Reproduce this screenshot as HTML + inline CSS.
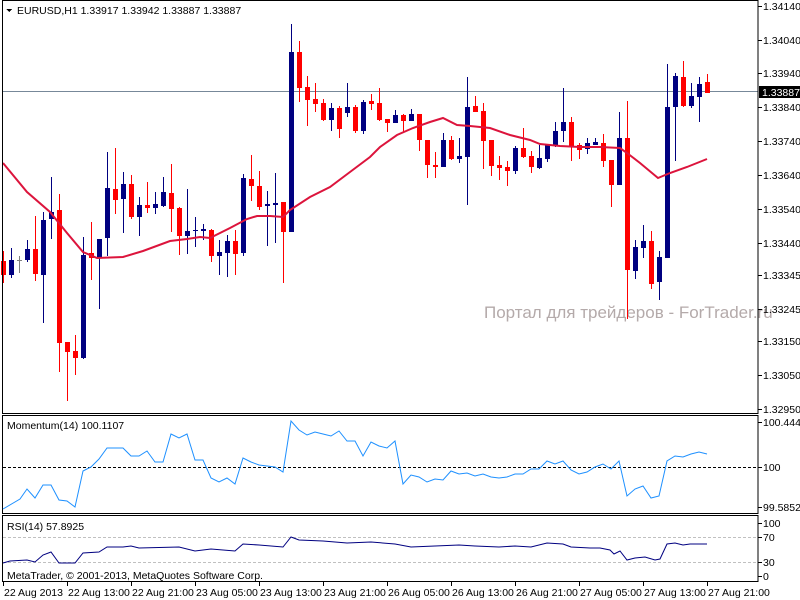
<!DOCTYPE html>
<html><head><meta charset="utf-8">
<style>
html,body{margin:0;padding:0;background:#fff;}
body{width:800px;height:600px;overflow:hidden;position:relative;font-family:"Liberation Sans",sans-serif;}
svg{position:absolute;left:0;top:0;}
text{font-family:"Liberation Sans","DejaVu Sans",sans-serif;font-size:10.5px;fill:#000;}
</style></head><body>
<svg id="s" width="800" height="600" viewBox="0 0 800 600" shape-rendering="crispEdges">
<text x="484" y="318" style="font-size:17px;fill:#b4aaaa;font-family:'Liberation Sans','DejaVu Sans',sans-serif">Портал для трейдеров - ForTrader.ru</text>
<line x1="2" y1="91.5" x2="758" y2="91.5" stroke="#778899" stroke-width="1"/>
<g id="c"></g>
<polyline id="ma" fill="none" stroke="#dc143c" stroke-width="2" shape-rendering="auto" points="3,163 27,192 50,212 67,233 83,252 97,258 123,257 143,251 170,241 187,239 200,237 210,238 230,228 247,219 257,216 270,216 283,217 290,210 310,197 330,187 350,172 370,157 380,147 397,135 413,128 430,122 443,118 457,125 470,126 490,128 510,135 530,140 540,144 560,146 580,147 600,147 620,148 627,153 640,163 658,178 670,173 687,167 707,159"/>
<rect x="2.5" y="0.5" width="755.5" height="413" fill="none" stroke="#000"/>
<rect x="2.5" y="415.5" width="755.5" height="98" fill="none" stroke="#000"/>
<rect x="2.5" y="515.5" width="755.5" height="66" fill="none" stroke="#000"/>
<polygon points="6,9 12,9 9,12" fill="#000"/>
<text x="17" y="14">EURUSD,H1  1.33917 1.33942 1.33887 1.33887</text>
<text x="7" y="429">Momentum(14) 100.1107</text>
<text x="7" y="530">RSI(14) 57.8925</text>
<text x="7" y="579">MetaTrader, © 2001-2013, MetaQuotes Software Corp.</text>
<line x1="3" y1="467.5" x2="758" y2="467.5" stroke="#000" stroke-dasharray="3,2"/>
<polyline fill="none" stroke="#1e90ff" stroke-width="1" shape-rendering="auto" points="3,509 20,499 27,489 35,498 43,485 51,485 59,500 67,501 75,507 83,471 91,467 99,459 107,448 115,448 123,448 131,456 139,456 147,451 155,462 163,462 171,434 179,438 187,434 195,460 203,460 211,478 219,482 227,478 235,484 243,458 251,462 259,465 267,466 275,467 283,472 291,421 299,430 307,435 315,432 323,434 331,436 339,431 347,441 355,441 363,456 371,442 379,446 387,448 395,441 403,484 411,475 419,477 427,482 435,479 443,480 451,471 459,474 467,473 475,476 483,474 491,477 499,478 507,477 515,474 523,474 531,469 539,469 547,461 555,464 563,461 571,470 579,474 587,472 595,467 603,464 611,469 619,461 627,496 635,489 643,486 651,498 659,496 667,461 675,456 683,457 691,454 699,452 707,454"/>
<line x1="3" y1="537.5" x2="758" y2="537.5" stroke="#c0c0c0" stroke-dasharray="3,2"/>
<line x1="3" y1="562.5" x2="758" y2="562.5" stroke="#c0c0c0" stroke-dasharray="3,2"/>
<polyline fill="none" stroke="#000080" stroke-width="1" shape-rendering="auto" points="3,563 10,561 27,560 35,562 43,555 51,552 59,563 75,563 83,553 99,552 107,547 123,547 131,546 139,548 179,547 195,551 211,549 235,551 243,544 259,545 283,547 291,537 299,540 323,541 347,543 371,542 395,544 411,547 435,546 459,545 475,546 499,547 515,546 531,547 547,543 563,544 571,547 590,548 600,548 610,550 614,554 620,551 627,560 635,558 645,557 655,560 660,559 667,544 675,543 683,545 690,544 707,544"/>
<g id="ax"></g>
<rect x="759" y="86" width="41" height="12" fill="#000"/>
<text x="762" y="96" style="fill:#fff">1.33887</text>
</svg>
<script>
var d=[[261,275,251,283,'r'],[260,275,248,278,'b'],[260,260,256,273,'g'],[249,260,240,262,'b'],[249,274,216,281,'r'],[220,275,212,323,'b'],[212,219,177,239,'b'],[210,343,194,372,'r'],[342,352,342,401,'r'],[351,358,335,375,'r'],[255,358,237,359,'b'],[253,258,222,280,'r'],[239,257,239,309,'b'],[188,238,152,256,'b'],[189,200,148,214,'r'],[184,199,172,233,'b'],[184,217,175,219,'r'],[205,217,197,236,'b'],[205,208,182,213,'r'],[204,208,192,214,'b'],[192,206,177,207,'b'],[193,209,164,232,'r'],[208,236,207,255,'r'],[231,236,189,254,'b'],[230,231,217,247,'b'],[229,231,224,240,'b'],[230,256,229,262,'r'],[252,256,240,275,'b'],[241,253,235,277,'b'],[241,254,230,275,'r'],[178,253,174,256,'b'],[179,186,155,201,'r'],[186,207,171,210,'r'],[204,206,191,246,'b'],[203,205,173,243,'b'],[202,232,202,283,'r'],[52,232,24,232,'b'],[52,88,41,102,'r'],[87,100,76,126,'r'],[99,104,83,112,'r'],[103,120,99,121,'r'],[108,120,103,131,'b'],[108,129,106,138,'r'],[107,113,83,117,'b'],[107,131,105,133,'r'],[102,131,100,134,'b'],[101,104,94,110,'r'],[103,120,88,121,'r'],[119,123,119,132,'r'],[115,123,110,123,'b'],[115,121,114,132,'r'],[114,121,109,121,'b'],[114,140,114,151,'r'],[140,165,140,178,'r'],[165,167,152,178,'r'],[140,167,133,167,'b'],[140,159,136,160,'r'],[156,159,138,163,'b'],[107,157,77,205,'b'],[106,112,96,112,'r'],[111,141,103,169,'r'],[140,166,140,176,'r'],[165,168,156,180,'r'],[167,171,161,186,'r'],[148,171,146,174,'b'],[148,157,128,158,'r'],[156,167,151,173,'r'],[158,168,145,169,'b'],[145,159,145,162,'b'],[131,146,122,147,'b'],[122,131,88,142,'b'],[122,146,117,161,'r'],[145,150,143,159,'r'],[143,149,138,154,'b'],[142,145,138,145,'b'],[143,161,134,167,'r'],[160,185,160,207,'r'],[138,185,112,185,'b'],[138,270,101,319,'r'],[247,271,240,279,'b'],[241,248,225,258,'b'],[241,284,231,289,'r'],[257,282,251,300,'b'],[107,258,64,258,'b'],[76,107,73,161,'b'],[77,106,61,107,'r'],[96,106,83,108,'b'],[84,97,77,122,'b'],[82,93,74,93,'r']];
var h='';
d.forEach(function(c,k){var x=3+8*k;var col=c[4]=='r'?'#ff0000':(c[4]=='b'?'#000080':'#808080');
h+='<rect x="'+x+'" y="'+c[2]+'" width="1" height="'+Math.max(1,c[3]-c[2])+'" fill="'+col+'"/>';
h+='<rect x="'+(x-2)+'" y="'+c[0]+'" width="5" height="'+Math.max(1,c[1]-c[0])+'" fill="'+col+'"/>';});
document.getElementById('c').innerHTML=h;
var a='';
[['1.34140',6],['1.34040',40],['1.33940',73],['1.33840',107],['1.33740',141],['1.33640',175],['1.33540',209],['1.33440',243],['1.33345',275],['1.33245',309],['1.33150',341],['1.33050',375],['1.32950',409],
['100.4444',422],['100',467],['99.5852',507],['100',523],['70',537],['30',562],['0',576]].forEach(function(p){
a+='<line x1="758" y1="'+(p[1]+.5)+'" x2="762" y2="'+(p[1]+.5)+'" stroke="#000"/><text x="763" y="'+(p[1]+4)+'">'+p[0]+'</text>';});
['22 Aug 2013','22 Aug 13:00','22 Aug 21:00','23 Aug 05:00','23 Aug 13:00','23 Aug 21:00','26 Aug 05:00','26 Aug 13:00','26 Aug 21:00','27 Aug 05:00','27 Aug 13:00','27 Aug 21:00'].forEach(function(t,i){var x=3+64*i;
a+='<line x1="'+(x+.5)+'" y1="582" x2="'+(x+.5)+'" y2="586" stroke="#000"/><text x="'+(x+1)+'" y="596">'+t+'</text>';});
document.getElementById('ax').innerHTML=a;
</script>
</body></html>
